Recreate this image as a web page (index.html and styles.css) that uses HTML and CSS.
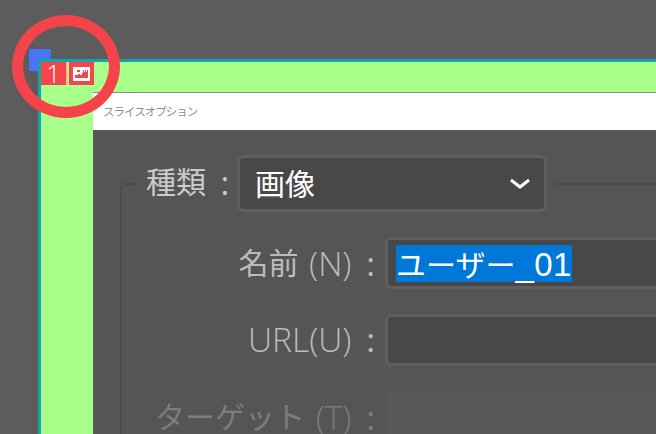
FILE: index.html
```html
<!DOCTYPE html>
<html lang="ja">
<head>
<meta charset="utf-8">
<title>スライスオプション</title>
<link rel="stylesheet" href="styles.css">
</head>
<body>
<div class="canvas">
  <div class="corner"></div>
  <div class="slice">
    <div class="badges">
      <span class="badge-num">1</span>
      <span class="badge-icon">
        <svg width="17" height="14" viewBox="0 0 17 14"><path fill="#fff" fill-rule="evenodd" d="M0 0h17v14H0zM2 11V8h3V7h2v1h2V6h1V3h1v2h1V3h1v2h1V3h1v8zM4 3h3v2H4z"/></svg>
      </span>
    </div>
    <div class="dialog">
      <div class="titlebar">スライスオプション</div>
      <div class="body">
        <div class="group">
          <div class="legend">
            <span class="legend-label"><span class="cjk">種類</span> <span class="colon">:</span></span>
            <div class="select"><span class="select-value">画像</span>
              <svg class="chev" width="20" height="12" viewBox="0 0 20 12"><path d="M1 2l9 7 9-7" fill="none" stroke="#fff" stroke-width="3"/></svg>
            </div>
          </div>
          <div class="row">
            <label class="label"><span class="cjk">名前</span> (N) <span class="colon">:</span></label>
            <div class="field"><span class="selected"><span class="cjk">ユーザー</span>_01</span></div>
          </div>
          <div class="row">
            <label class="label">URL(U) <span class="colon">:</span></label>
            <div class="field"></div>
          </div>
          <div class="row dim">
            <label class="label"><span class="cjk">ターゲット</span> (T) <span class="colon">:</span></label>
            <div class="field"></div>
          </div>
        </div>
      </div>
    </div>
  </div>
  <div class="ring"></div>
</div>
</body>
</html>
```
FILE: styles.css
```css
* { box-sizing: border-box; }
html, body { margin: 0; height: 100%; }
body { background: #5c5c5c; overflow: hidden; font-family: "Open Sans", "Noto Sans CJK JP", sans-serif; }
.canvas { position: relative; width: 656px; height: 434px; overflow: hidden; }
.corner { position: absolute; left: 29px; top: 49px; width: 22px; height: 22px; background: #4a74f6; }
.slice { position: absolute; left: 38px; top: 59px; width: 660px; height: 420px; border: 3px solid #12a6ac; border-right: 0; border-bottom: 0; background: #a8ff8a; padding: 30px 0 0 52px; }
.badges { position: absolute; left: 0; top: 0; display: flex; gap: 3px; }
.badge-num { width: 25px; height: 23px; background: #f5444a; color: #fff; font: 300 26px/23px "Open Sans", sans-serif; text-align: center; box-shadow: 1.5px 0 0 #e8c08c; }
.badge-icon { width: 25px; height: 23px; background: #f5444a; display: flex; align-items: center; justify-content: center; }
.dialog { height: 100%; border-top: 1px solid #8a8a8a; background: #555; }
.titlebar { height: 37px; background: #fff; color: #8f8f8f; font-family: "Noto Sans CJK JP", sans-serif; font-size: 11.5px; line-height: 37px; padding-left: 10px; letter-spacing: -1px; }
.body { padding: 53px 0 0 27px; }
.group { border-left: 2px solid #4c4c4c; border-top: 2px solid #4c4c4c; border-top-left-radius: 5px; height: 300px; }
.legend { display: inline-flex; align-items: center; height: 57px; margin: -30px 0 0 14px; padding-right: 9px; background: #555; vertical-align: top; }
.legend-label { width: 101px; padding: 0 0 4px 10px; color: #ccc; font-size: 33px; font-weight: 300; line-height: 1; white-space: nowrap; word-spacing: 2px; }
.cjk { font-family: "Noto Sans CJK JP", sans-serif; font-size: 30px; font-weight: 400; letter-spacing: 0; vertical-align: 2px; }
.selected .cjk { vertical-align: 0; }
.colon { margin-left: 4px; font-weight: 400; }
.select { width: 310px; height: 57px; border: 3px solid #5f5f5f; border-radius: 6px; background: #484848; color: #fff; font-family: "Noto Sans CJK JP", sans-serif; font-size: 30px; display: flex; align-items: center; justify-content: space-between; padding: 0 14px 0 15px; }
.select-value { padding-bottom: 3px; }
.row { display: flex; align-items: center; margin-top: 25px; height: 52px; }
.label { width: 253px; flex: none; text-align: right; color: #bcbcbc; font-size: 33.5px; font-weight: 300; white-space: nowrap; line-height: 1; word-spacing: 2px; }
.field { flex: 1; height: 52px; margin-left: 10px; border: 3px solid #5f5f5f; border-right: 0; border-radius: 6px 0 0 6px; background: #484848; padding: 5px 0 0 8px; }
.selected { display: inline-block; height: 37px; line-height: 37px; background: #0078d7; color: #fff; font-family: "Liberation Sans", sans-serif; font-size: 33px; letter-spacing: 0.5px; white-space: nowrap; }
.dim .label { color: #7c7c7c; }
.dim .field { background: #595959; border-color: #595959; }
.ring { position: absolute; left: 12px; top: 15px; width: 108px; height: 103px; border: 11px solid #f5434a; border-radius: 50%; }
```
